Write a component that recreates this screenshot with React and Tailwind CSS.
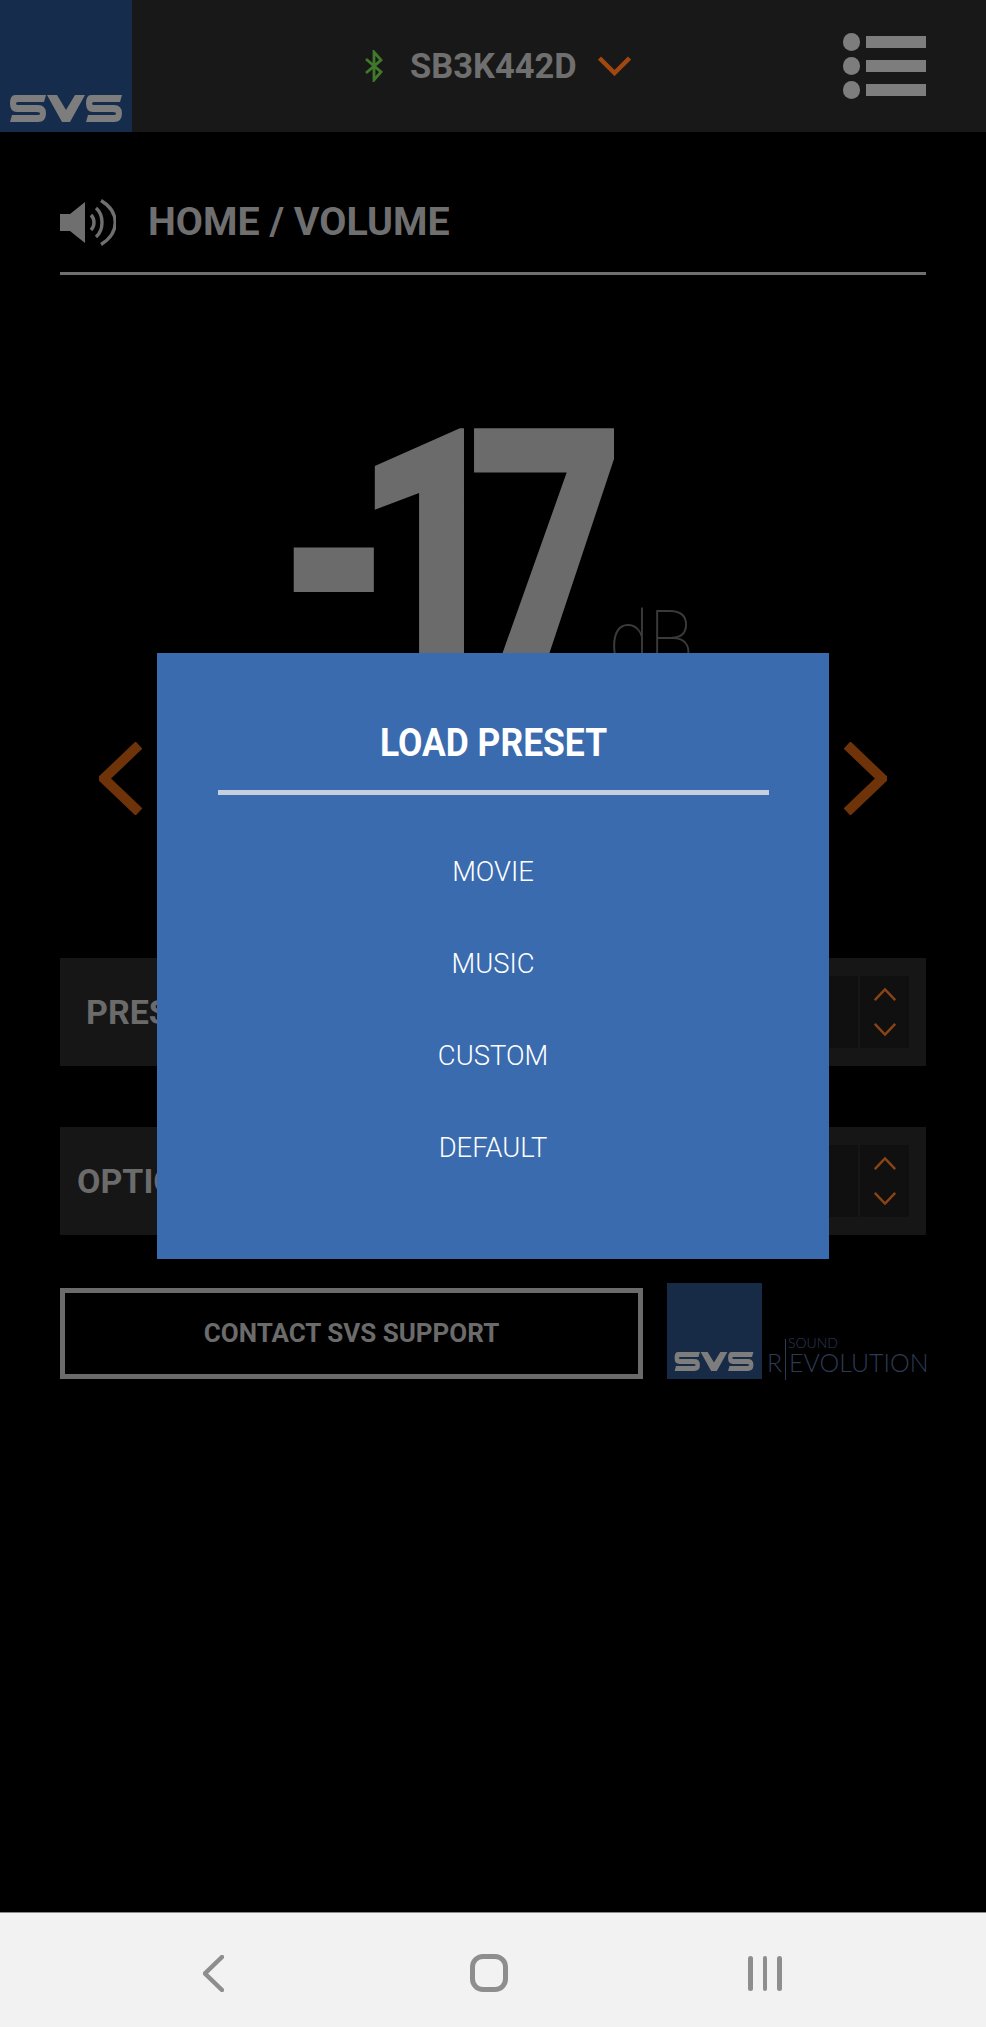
import React from 'react';

const roboto = { fontFamily: 'Roboto, "Liberation Sans", sans-serif' };

// stylised SVS wordmark
function SvsLogo({ className, color = '#7d7d7d' }) {
  return (
    <svg className={className} viewBox="0 0 112 27" fill={color}>
      <path d="M5 0H36L34 7H8Q6 7 6 8.5T8 10H28Q36 10 36 18.5T28 27H0L2 20H27Q30 20 30 18.5T27 17H7Q0 17 0 8.5T5 0Z" />
      <path d="M37 0H47L56 15L65 0H75L60 27H52Z" />
      <path d="M81 0H112L110 7H84Q82 7 82 8.5T84 10H104Q112 10 112 18.5T104 27H76L78 20H103Q106 20 106 18.5T103 17H83Q76 17 76 8.5T81 0Z" />
    </svg>
  );
}

function Chevron({ up, className }) {
  return (
    <svg className={className} viewBox="0 0 24 14" fill="none" stroke="currentColor" strokeWidth="2.6">
      <path d={up ? 'M1 13L12 1.5L23 13' : 'M1 1L12 12.5L23 1'} />
    </svg>
  );
}

function SelectRow({ label, labelPad }) {
  return (
    <div className={`flex h-[108px] items-center justify-between bg-[#161616] pr-[17px] ${labelPad}`}>
      <span className="text-[34px] leading-none font-bold text-[#6b6b6b]">{label}</span>
      <div className="flex h-[72px] gap-[2px]">
        <div className="w-[60px] bg-[#101010]" />
        <div className="flex w-[49px] flex-col items-center justify-between bg-[#101010] py-[12px] text-[#8a4313]">
          <Chevron up className="h-[13px] w-[24px]" />
          <Chevron className="h-[13px] w-[24px]" />
        </div>
      </div>
    </div>
  );
}

export default function App() {
  const presets = ['MOVIE', 'MUSIC', 'CUSTOM', 'DEFAULT'];

  return (
    <div className="relative flex h-[2027px] w-full flex-col overflow-hidden bg-black" style={roboto}>
      {/* top bar */}
      <header className="flex h-[132px] shrink-0 items-stretch bg-[#181818]">
        <div className="flex w-[132px] items-end bg-[#152c4c] px-[10px] pb-[10px]">
          <SvsLogo className="h-[27px] w-[112px]" />
        </div>
        <div className="flex flex-1 items-center pl-[233px]">
          <svg className="h-[32px] w-[18px]" viewBox="0 0 18 32" fill="none" stroke="#3f7a2a" strokeWidth="2.8">
            <path d="M1 9L16 22L9 30V2L16 10L1 23" />
          </svg>
          <span className="ml-[27px] text-[34.5px] leading-none font-bold text-[#6f6f6f]">SB3K442D</span>
          <svg className="ml-[21px] h-[20px] w-[33px]" viewBox="0 0 33 20" fill="none" stroke="#a0480f" strokeWidth="4.5">
            <path d="M1.5 2L16.5 17L31.5 2" />
          </svg>
        </div>
        <div className="flex flex-col justify-center gap-[6px] pr-[60px]">
          {[0, 1, 2].map((i) => (
            <div key={i} className="flex items-center gap-[6px]">
              <div className="h-[18px] w-[17px] rounded-full bg-[#7d7d7d]" />
              <div className="h-[12px] w-[60px] bg-[#7d7d7d]" />
            </div>
          ))}
        </div>
      </header>

      <main className="flex flex-1 flex-col px-[60px]">
        {/* section title */}
        <div className="flex h-[143px] items-center gap-[32px] border-b-[3px] border-[#6f6f6f] pt-[40px]">
          <svg className="h-[47px] w-[56px]" viewBox="0 0 56 47" fill="none" stroke="#6f6f6f" strokeWidth="3.4">
            <path d="M0 15H10L25 3V44L10 32H0Z" fill="#6f6f6f" stroke="none" />
            <path d="M31 16C35 20 35 27 31 31" />
            <path d="M36 9C44 16 44 31 36 38" />
            <path d="M41 1.5C60 13 60 34 41 45.5" />
          </svg>
          <span className="text-[39.4px] leading-none font-bold text-[#6f6f6f]">HOME / VOLUME</span>
        </div>

        {/* volume readout */}
        <section className="flex h-[683px] px-[39px]">
          <svg className="mt-[467px] h-[73px] w-[43px] shrink-0" viewBox="0 0 43 73" fill="none" stroke="#6e3308" strokeWidth="10">
            <path d="M40 3L5 36.5L40 70" />
          </svg>
          <div className="flex flex-1 items-start justify-center pt-[122px]">
            <span className="-ml-[59px] inline-block origin-center scale-x-[0.78] text-[350px] leading-[320px] font-black tracking-[-56px] text-[#6b6b6b]">-17</span>
            <span className="mt-[203px] -ml-[21px] inline-block scale-x-[0.92] text-[80px] leading-none font-thin text-[#3a3a3a]">dB</span>
          </div>
          <svg className="mt-[467px] h-[73px] w-[43px] shrink-0" viewBox="0 0 43 73" fill="none" stroke="#6e3308" strokeWidth="10">
            <path d="M3 3L38 36.5L3 70" />
          </svg>
        </section>

        <div className="flex flex-col gap-[61px]">
          <SelectRow label="PRESET" labelPad="pl-[26px]" />
          <SelectRow label="OPTIONS" labelPad="pl-[17px]" />
        </div>

        {/* support button and brand */}
        <div className="mt-[48px] flex items-end justify-between">
          <button className="flex h-[91px] w-[583px] items-center justify-center border-[5px] border-[#6b6b6b] text-[26px] font-bold text-[#6b6b6b]">
            CONTACT SVS SUPPORT
          </button>
          <div className="flex items-end">
            <div className="flex h-[96px] w-[95px] items-end bg-[#172b47] px-[7px] pb-[8px]">
              <SvsLogo className="h-[19px] w-[80px]" />
            </div>
            <div className="relative ml-[5px] mb-[3px] flex h-[26px] w-[159px] items-center text-[24.9px] font-light text-[#2c3a55]" style={{ fontFamily: 'Lato, sans-serif' }}>
              <span>R</span>
              <span className="mx-[3px] h-[41px] w-[1px] shrink-0 -translate-y-[4px] bg-[#2c3a55]" />
              <span>EVOLUTION</span>
              <span className="absolute -top-[14px] left-[21px] text-[14px] leading-none">SOUND</span>
            </div>
          </div>
        </div>
      </main>

      {/* android nav bar */}
      <nav className="flex h-[115px] shrink-0 items-center border-t border-[#8a8a8a] bg-[#f2f2f2] pl-[203px] pt-[6px]">
        <svg className="h-[37px] w-[21px]" viewBox="0 0 21 37" fill="none" stroke="#8e8e8e" strokeWidth="4.5" strokeLinecap="round">
          <path d="M19 2L2 18.5L19 35" />
        </svg>
        <div className="ml-[246px] h-[38px] w-[38px] rounded-[13px] border-[5px] border-[#8e8e8e]" />
        <div className="ml-[240px] flex gap-[10px]">
          {[0, 1, 2].map((i) => (
            <div key={i} className="h-[35px] w-[4.5px] rounded-full bg-[#8e8e8e]" />
          ))}
        </div>
      </nav>

      {/* load preset dialog */}
      <div className="absolute top-[653px] left-[157px] flex h-[606px] w-[672px] flex-col items-center bg-[#3a6bae]">
        <h2 className="mt-[68px] scale-x-[0.92] text-[38.5px] leading-[44px] font-bold text-white">LOAD PRESET</h2>
        <div className="mt-[25px] h-[5px] w-[551px] bg-[#c5cfdf]" />
        <ul className="mt-[61px] flex flex-col items-center gap-[60px]">
          {presets.map((p) => (
            <li key={p} className="text-[27.4px] leading-[32px] font-light text-white">{p}</li>
          ))}
        </ul>
      </div>
    </div>
  );
}
